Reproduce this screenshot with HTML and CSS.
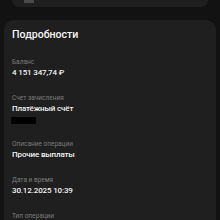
FILE: index.html
```html
<!DOCTYPE html>
<html lang="ru">
<head>
<meta charset="utf-8">
<link rel="stylesheet" href="styles.css">
</head>
<body>
<div class="top-card"><span class="top-icon"></span></div>
<section class="card">
  <h2 class="title">Подробности</h2>
  <div class="field">
    <div class="label">Баланс</div>
    <div class="value">4 151 347,74 ₽</div>
  </div>
  <div class="field">
    <div class="label">Счет зачисления</div>
    <div class="value">Платёжный счёт</div>
    <div class="mask"></div>
  </div>
  <div class="field">
    <div class="label">Описание операции</div>
    <div class="value">Прочие выплаты</div>
  </div>
  <div class="field">
    <div class="label">Дата и время</div>
    <div class="value">30.12.2025 10:39</div>
  </div>
  <div class="field">
    <div class="label">Тип операции</div>
  </div>
</section>
</body>
</html>
```

FILE: styles.css
```css
* { box-sizing: border-box; }
html, body { margin: 0; padding: 0; }
body {
  background: #121212;
  font-family: Roboto, "Noto Sans", sans-serif;
  color: #f2f2f2;
  width: 220px;
  height: 220px;
  overflow: hidden;
}
.top-card {
  margin: 0 12px;
  height: 7px;
  background: #1f1f1f;
  border-radius: 0 0 9px 9px;
  padding-left: 12px;
  display: flex;
  align-items: flex-start;
}
.top-icon {
  width: 10px;
  height: 3px;
  background: #4a4a4a;
}
.card {
  margin: 13px 4px 0;
  background: #1f1f1f;
  border-radius: 10px;
  padding: 8px 8px 20px;
  display: flex;
  flex-direction: column;
  gap: 16px;
}
.title {
  margin: 0;
  font-size: 10.6px;
  line-height: 14px;
  font-weight: 500;
  color: #f5f5f5;
}
.field {
  display: flex;
  flex-direction: column;
}
.label {
  font-size: 6.5px;
  line-height: 9px;
  color: #7c7c7c;
}
.value {
  font-size: 8px;
  line-height: 11px;
  font-weight: 500;
  letter-spacing: -0.15px;
  color: #f2f2f2;
}
.mask {
  width: 25px;
  height: 7px;
  background: #000;
  margin: 3px 0 0 -1px;
}
```
